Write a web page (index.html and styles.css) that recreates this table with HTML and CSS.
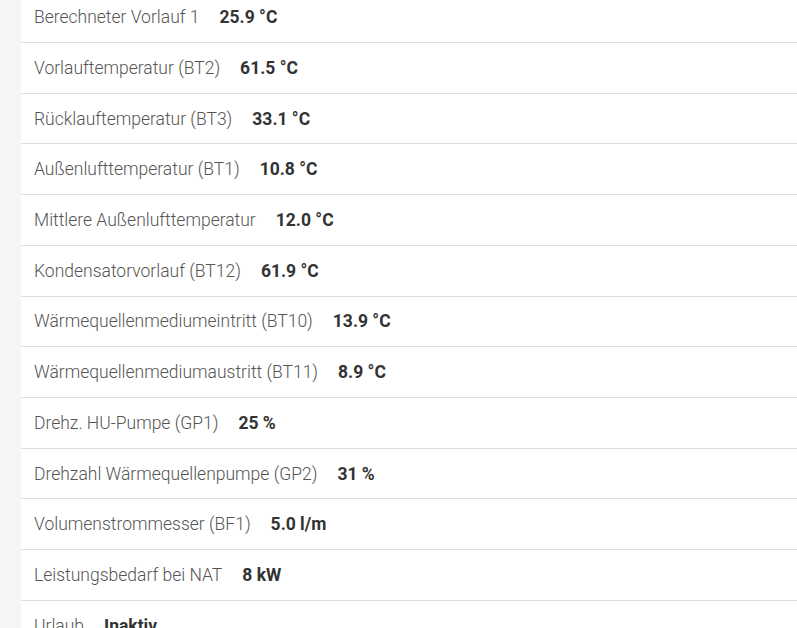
FILE: index.html
```html
<!DOCTYPE html>
<html lang="de">
<head>
<meta charset="utf-8">
<title>Werte</title>
<link rel="stylesheet" href="styles.css">
</head>
<body>
<div class="page">
  <div class="side"></div>
  <div class="list">
    <div class="row"><span class="label">Berechneter Vorlauf 1</span><span class="value">25.9 °C</span></div>
    <div class="row"><span class="label">Vorlauftemperatur (BT2)</span><span class="value">61.5 °C</span></div>
    <div class="row"><span class="label">Rücklauftemperatur (BT3)</span><span class="value">33.1 °C</span></div>
    <div class="row"><span class="label">Außenlufttemperatur (BT1)</span><span class="value">10.8 °C</span></div>
    <div class="row"><span class="label">Mittlere Außenlufttemperatur</span><span class="value">12.0 °C</span></div>
    <div class="row"><span class="label">Kondensatorvorlauf (BT12)</span><span class="value">61.9 °C</span></div>
    <div class="row"><span class="label">Wärmequellenmediumeintritt (BT10)</span><span class="value">13.9 °C</span></div>
    <div class="row"><span class="label">Wärmequellenmediumaustritt (BT11)</span><span class="value">8.9 °C</span></div>
    <div class="row"><span class="label">Drehz. HU-Pumpe (GP1)</span><span class="value">25 %</span></div>
    <div class="row"><span class="label">Drehzahl Wärmequellenpumpe (GP2)</span><span class="value">31 %</span></div>
    <div class="row"><span class="label">Volumenstrommesser (BF1)</span><span class="value">5.0 l/m</span></div>
    <div class="row"><span class="label">Leistungsbedarf bei NAT</span><span class="value">8 kW</span></div>
    <div class="row"><span class="label">Urlaub</span><span class="value">Inaktiv</span></div>
  </div>
</div>
</body>
</html>
```
FILE: styles.css
```css
html, body {
  margin: 0;
  padding: 0;
  background: #ffffff;
  overflow: hidden;
}
.page {
  display: flex;
  height: 628px;
  overflow: hidden;
  font-family: Roboto, "Liberation Sans", sans-serif;
}
.side {
  width: 21px;
  flex: none;
  background: #f5f5f5;
}
.list {
  flex: 1;
  margin-top: -7.73px;
}
.row {
  display: flex;
  align-items: center;
  height: 50.73px;
  box-sizing: border-box;
  border-bottom: 1px solid #dddddd;
  padding-left: 13px;
  font-size: 17.5px;
}
.label {
  font-weight: 300;
  color: #555555;
}
.value {
  font-weight: 700;
  color: #333333;
  margin-left: 20px;
}
```
